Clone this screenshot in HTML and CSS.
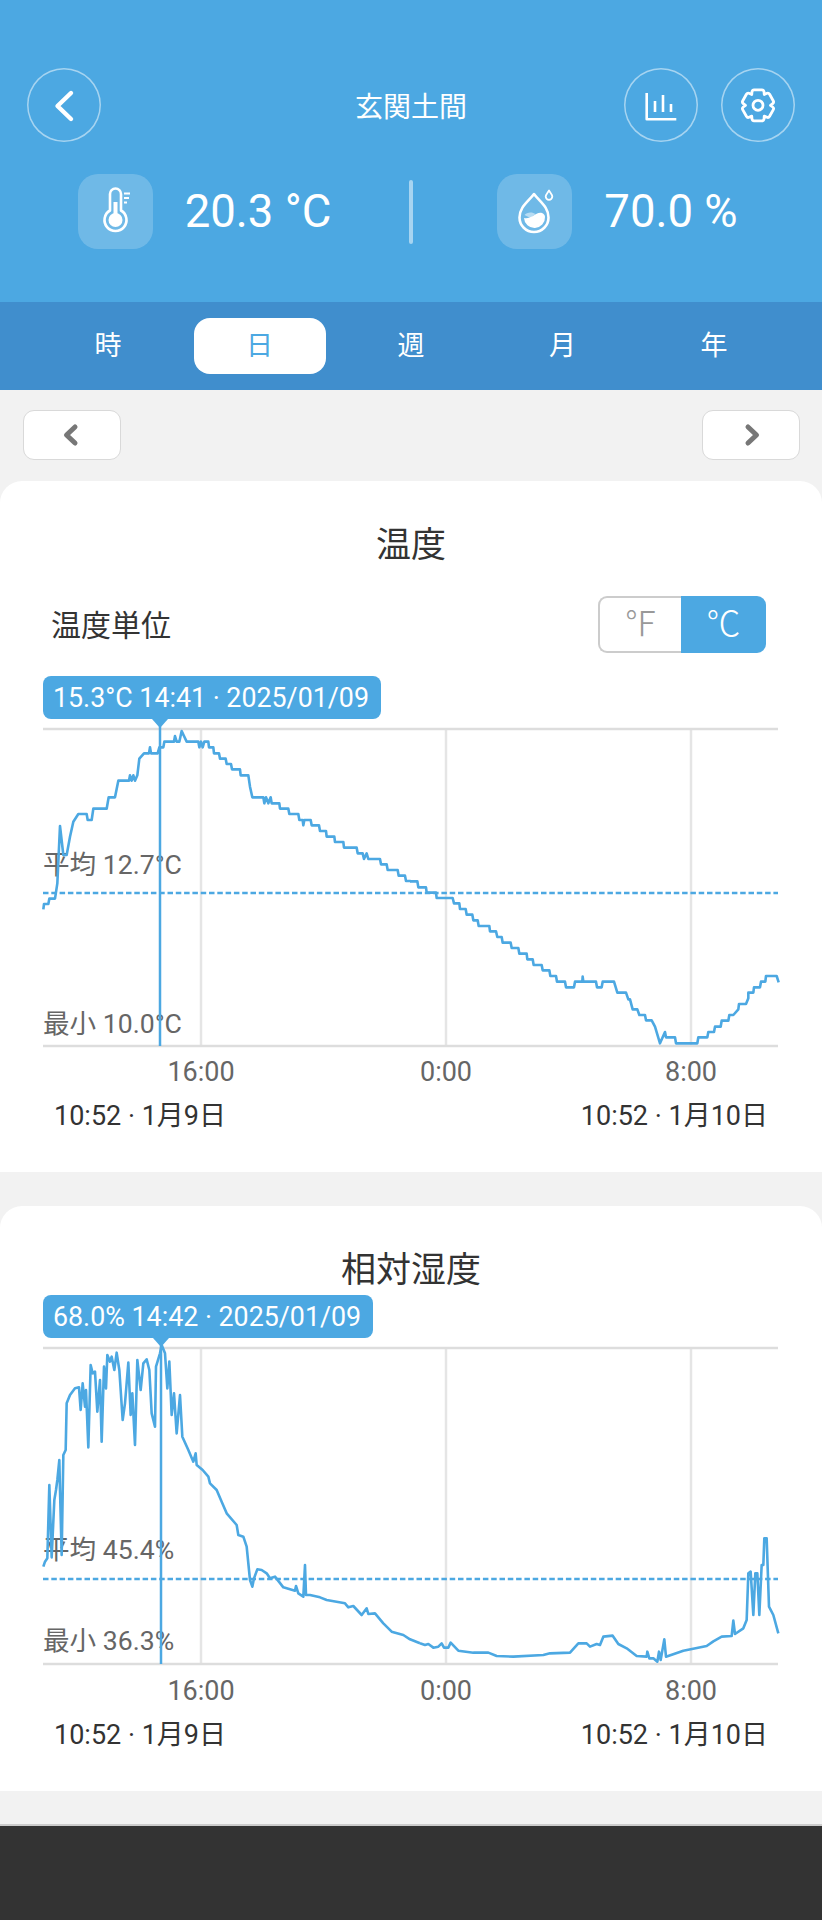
FILE: index.html
```html
<!DOCTYPE html>
<html lang="ja">
<head>
  <meta charset="UTF-8">
  <title>玄関土間</title>
  <meta name="viewport" content="width=device-width, initial-scale=1.0">
  <link rel="stylesheet" href="styles.css">
</head>
<body>

  <!-- Header -->
  <header class="header">
    <div class="top-row">
      <div class="top-left">
        <button class="round-btn">
          <svg width="74" height="74" viewBox="0 0 74 74"><polyline class="icon-line thick" points="44,25 30.5,38 44,51"/></svg>
        </button>
      </div>
      <div class="place">玄関土間</div>
      <div class="top-right">
        <button class="round-btn">
          <svg width="74" height="74" viewBox="0 0 74 74">
            <polyline class="icon-line" points="22.7,25 22.7,51.3 52.3,51.3"/>
            <path class="icon-line" d="M31 33V44M39 27V44M47 36V44"/>
          </svg>
        </button>
        <button class="round-btn">
          <svg width="74" height="74" viewBox="0 0 74 74">
            <g transform="translate(37 37.3)">
              <path class="icon-line gear" d="M6.25-10.8L9-12Q10.6-12.6 11.6-11L15.2-4.6Q16.2-2.9 14.7-1.7L12.5 0L14.7 1.7Q16.2 2.9 15.2 4.6L11.6 11Q10.6 12.6 9 12L6.25 10.8L6 13.7Q5.6 15.5 4 15.5H-4Q-5.6 15.5-6 13.7L-6.25 10.8L-9 12Q-10.6 12.6-11.6 11L-15.2 4.6Q-16.2 2.9-14.7 1.7L-12.5 0L-14.7-1.7Q-16.2-2.9-15.2-4.6L-11.6-11Q-10.6-12.6-9-12L-6.25-10.8L-6-13.7Q-5.6-15.5-4-15.5H4Q5.6-15.5 6-13.7z"/>
              <circle class="icon-line gear" r="5"/>
            </g>
          </svg>
        </button>
      </div>
    </div>

    <div class="stats">
      <div class="stat">
        <div class="tile">
          <svg width="75" height="75" viewBox="0 0 75 75">
            <path class="icon-line" d="M32 36.5V20a5.5 5.5 0 0 1 11 0V36.5a11 11 0 1 1-11 0z"/>
            <circle class="icon-fill" cx="37.5" cy="46" r="7"/>
            <rect class="icon-fill" x="35.5" y="28" width="4" height="18"/>
            <path class="icon-line tick" d="M46 19.5H52M46 24H51M46 28.5H49"/>
          </svg>
        </div>
        <span class="stat-value">20.3 °C</span>
      </div>
      <div class="divider"></div>
      <div class="stat">
        <div class="tile">
          <svg width="75" height="75" viewBox="0 0 75 75">
            <path class="icon-line" d="M37 20C31 28 22.5 33 22.5 43.5a14.5 14.5 0 0 0 29 0C51.5 33 43 28 37 20z"/>
            <path class="icon-fill pale" d="M27.5 41c2-3 8-3.5 11-1l-5 4z"/>
            <path class="icon-fill" d="M27 44c4 1 6-1 9-2c3-2 6-4 9-3c2 1 3 2 3 4a10.5 10.5 0 0 1-21 1z"/>
            <path class="icon-line tick" d="M52 16.5c-1.5 2.5-3.3 4-3.3 6a3.3 3.3 0 0 0 6.6 0c0-2-1.8-3.5-3.3-6z"/>
          </svg>
        </div>
        <span class="stat-value">70.0 %</span>
      </div>
    </div>
  </header>

  <!-- Range tabs -->
  <nav class="tabs">
    <div class="tab">時</div>
    <div class="tab active">日</div>
    <div class="tab">週</div>
    <div class="tab">月</div>
    <div class="tab">年</div>
  </nav>

  <!-- Prev / next -->
  <div class="pager">
    <button class="page-btn">
      <svg width="20" height="26" viewBox="0 0 20 26"><polyline class="chev" points="13,5 4.5,13 13,21"/></svg>
    </button>
    <button class="page-btn">
      <svg width="20" height="26" viewBox="0 0 20 26"><polyline class="chev" points="7,5 15.5,13 7,21"/></svg>
    </button>
  </div>

  <!-- Temperature -->
  <section class="card">
    <h2 class="card-title">温度</h2>
    <div class="unit-row">
      <span class="unit-label">温度単位</span>
      <div class="unit-toggle">
        <span class="unit-opt">℉</span>
        <span class="unit-opt on">℃</span>
      </div>
    </div>
    <div class="tooltip tooltip-temp">15.3°C 14:41 · 2025/01/09</div>
    <svg class="chart" width="822" height="373" viewBox="0 719 822 373">
      <path class="grid" d="M201 729V1046M446 729V1046M691 729V1046"/>
      <path class="axis" d="M43 729H778M43 1046H778"/>
      <line class="avg" x1="43" y1="893" x2="778" y2="893"/>
      <text class="label" x="43" y="874">平均 12.7°C</text>
      <text class="label" x="43" y="1033">最小 10.0°C</text>
      <g transform="translate(20 670) scale(.33333)">
        <polyline class="series" points="70,718 72,702 85,702 88,686 105,686 112,640 120,468 130,555 140,555 150,500 160,455 175,432 200,432 203,450 215,450 220,416 260,416 266,382 285,382 295,332 327,332 330,316 335,332 340,316 345,332 352,316 358,266 372,250 387,250 390,232 393,250 413,250 418,232 430,232 433,215 462,215 465,198 470,215 478,215 485,183 492,198 500,215 535,215 538,232 543,215 548,232 553,215 565,215 567,232 580,232 582,250 597,250 600,266 617,266 620,282 633,282 636,298 660,298 662,316 685,316 690,350 697,382 730,382 733,400 738,382 745,400 752,382 755,400 778,400 780,416 805,416 808,432 835,432 838,450 848,450 850,466 853,450 872,450 875,466 897,466 900,483 918,483 920,500 943,500 945,516 970,516 972,533 1010,533 1013,550 1028,550 1032,567 1040,550 1045,567 1080,567 1083,583 1100,583 1103,600 1133,600 1136,617 1155,617 1158,633 1172,633"/>
      </g>
      <g transform="translate(410 800) scale(.33333)">
        <polyline class="series" points="0,244 22,244 25,262 48,262 50,278 78,278 80,294 128,294 132,310 148,310 150,327 167,327 170,344 187,344 190,361 203,361 206,378 238,378 240,394 258,394 262,411 275,411 278,428 302,428 305,444 325,444 328,461 350,461 352,478 368,478 371,495 395,495 398,511 418,511 421,528 438,528 441,545 465,545 468,562 492,562 495,545 517,545 518,530 520,545 558,545 561,562 575,562 578,545 612,545 622,578 648,578 655,598 660,598 668,628 682,628 688,645 705,645 708,661 725,661 735,680 750,730 758,712 765,696 768,712 795,712 798,730 862,730 865,712 892,712 895,696 912,696 915,680 932,680 935,662 955,662 958,645 970,645 985,628 987,612 1008,612 1015,595 1015,578 1030,578 1032,562 1050,562 1053,545 1066,545 1068,528 1100,528 1106,547"/>
      </g>
      <line class="cursor" x1="160" y1="719" x2="160" y2="1046"/>
      <polygon class="pointer" points="152,719 168,719 160,728"/>
      <text class="tick-label" x="201" y="1081">16:00</text>
      <text class="tick-label" x="446" y="1081">0:00</text>
      <text class="tick-label" x="691" y="1081">8:00</text>
    </svg>
    <div class="range-row">
      <span>10:52 · 1月9日</span>
      <span>10:52 · 1月10日</span>
    </div>
  </section>

  <!-- Humidity -->
  <section class="card card-rh">
    <h2 class="card-title">相対湿度</h2>
    <div class="tooltip tooltip-rh">68.0% 14:42 · 2025/01/09</div>
    <svg class="chart" width="822" height="373" viewBox="0 1338 822 373">
      <path class="grid" d="M201 1348V1664M446 1348V1664M691 1348V1664"/>
      <path class="axis" d="M43 1348H778M43 1664H778"/>
      <line class="avg" x1="43" y1="1579" x2="778" y2="1579"/>
      <text class="label" x="43" y="1559">平均 45.4%</text>
      <text class="label" x="43" y="1650">最小 36.3%</text>
      <g transform="translate(20 1480) scale(.33333)">
        <polyline class="series" points="70,260 75,245 82,235 88,15 95,232 103,60 108,30 112,0 118,-60 120,30 125,225 130,-75 137,-90 140,-230 150,-255 165,-275 177,-278 182,-210 188,-290 195,-220 198,-270 205,-98 212,-345 218,-320 225,-325 232,-205 240,-300 245,-115 252,-340 258,-275 262,-375 270,-355 275,-370 283,-330 290,-382 298,-330 308,-180 315,-230 325,-352 332,-195 337,-260 345,-105 352,-360 362,-270 370,-350 380,-362 388,-330 395,-200 405,-160 408,-340 420,-380 425,-405 435,-380 442,-275 448,-355 455,-195 462,-260 470,-140 480,-255 487,-130 505,-90 520,-55 527,-80 530,-45 548,-30 565,-10 570,10 590,30 605,65 620,100 650,135 655,165 670,170 680,200 690,300 697,320 702,295 712,268 725,270 740,280 750,295 765,290 790,322 825,332 828,318 835,340 850,350 855,255 858,345 870,345 900,352 920,360 975,370 985,382 1000,378 1025,405 1040,385 1045,402 1065,400 1090,430 1115,455 1150,465 1170,478 1200,490"/>
      </g>
      <g transform="translate(420 1500) scale(.33333)">
        <polyline class="series" points="0,430 15,435 25,432 40,443 55,440 65,430 72,443 85,443 92,428 115,452 160,458 205,458 230,468 280,470 370,465 390,460 450,458 475,430 500,430 510,440 530,432 540,435 550,410 578,407 595,432 620,445 650,468 680,470 682,455 688,475 700,475 712,485 717,455 722,480 733,418 738,470 790,452 860,438 880,424 905,410 935,408 940,362 945,402 970,385 980,360 985,220 992,215 1000,345 1006,220 1012,220 1018,345 1025,195 1030,195 1033,115 1040,115 1047,320 1060,345 1075,400"/>
      </g>
      <line class="cursor" x1="161" y1="1338" x2="161" y2="1664"/>
      <polygon class="pointer" points="153,1338 169,1338 161,1347"/>
      <text class="tick-label" x="201" y="1700">16:00</text>
      <text class="tick-label" x="446" y="1700">0:00</text>
      <text class="tick-label" x="691" y="1700">8:00</text>
    </svg>
    <div class="range-row">
      <span>10:52 · 1月9日</span>
      <span>10:52 · 1月10日</span>
    </div>
  </section>

  <footer class="footer"></footer>

</body>
</html>
```

FILE: styles.css
```css
/* Basic styling */
body {
  margin: 0;
  height: 1920px;
  overflow: hidden;
  background-color: #f2f2f2;
  color: #333;
  font-family: Roboto, "Noto Sans CJK JP", sans-serif;
}
button {
  padding: 0;
  background: none;
  font: inherit;
}
svg {
  display: block;
}

/* Header */
.header {
  height: 302px;
  box-sizing: border-box;
  padding-top: 68px;
  background-color: #4ca8e2;
  color: white;
}
.top-row {
  display: grid;
  grid-template-columns: 1fr auto 1fr;
  align-items: center;
  padding: 0 27px;
}
.top-left {
  display: flex;
}
.top-right {
  display: flex;
  justify-content: flex-end;
  gap: 23px;
}
.place {
  font-size: 28px;
}
.round-btn {
  width: 74px;
  height: 74px;
  border: 0;
  border-radius: 50%;
  box-shadow: inset 0 0 0 1.5px rgba(255, 255, 255, 0.5);
}
.icon-line {
  fill: none;
  stroke: white;
  stroke-width: 2.6;
  stroke-linecap: butt;
  stroke-linejoin: round;
}
.icon-line.thick {
  stroke-width: 4.4;
  stroke-linecap: round;
}
.icon-line.gear {
  stroke-width: 2.8;
}
.icon-line.tick {
  stroke-width: 1.8;
}
.icon-fill {
  fill: white;
}
.icon-fill.pale {
  opacity: 0.5;
}

/* Current readings */
.stats {
  display: flex;
  align-items: center;
  margin-top: 32px;
}
.stat {
  flex: 1;
  display: flex;
  align-items: center;
  justify-content: center;
  gap: 32px;
}
.tile {
  width: 75px;
  height: 75px;
  border-radius: 20px;
  background-color: rgba(255, 255, 255, 0.2);
}
.stat-value {
  font-size: 45.5px;
}
.divider {
  width: 4px;
  height: 64px;
  border-radius: 2px;
  background-color: rgba(255, 255, 255, 0.5);
}

/* Tabs */
.tabs {
  display: flex;
  justify-content: space-between;
  height: 88px;
  box-sizing: border-box;
  padding: 16px 42px;
  background-color: #408ecd;
  color: white;
}
.tab {
  width: 132px;
  height: 56px;
  border-radius: 16px;
  font-size: 27px;
  line-height: 56px;
  text-align: center;
}
.tab.active {
  background-color: white;
  color: #4ca8e2;
}

/* Prev / next */
.pager {
  display: flex;
  justify-content: space-between;
  padding: 20px 22px 21px 23px;
}
.page-btn {
  display: flex;
  align-items: center;
  justify-content: center;
  width: 98px;
  height: 50px;
  border: 1.5px solid #d9d9d9;
  border-radius: 11px;
  background-color: white;
}
.chev {
  fill: none;
  stroke: #777;
  stroke-width: 5;
  stroke-linecap: round;
  stroke-linejoin: round;
}

/* Cards */
.card {
  height: 691px;
  box-sizing: border-box;
  padding-top: 41px;
  border-radius: 22px 22px 0 0;
  background-color: white;
}
.card-rh {
  height: 585px;
  margin-top: 34px;
}
.card-title {
  margin: 0;
  font-size: 35px;
  font-weight: 400;
  line-height: 48px;
  text-align: center;
}
.unit-row {
  display: flex;
  align-items: center;
  justify-content: space-between;
  margin-top: 26px;
  padding: 0 56px 0 51px;
}
.unit-label {
  font-size: 30px;
  line-height: 50px;
  margin-top: 2px;
}
.unit-toggle {
  display: flex;
  height: 57px;
}
.unit-opt {
  width: 81px;
  border: 2px solid #ccc;
  border-right: 0;
  border-radius: 9px 0 0 9px;
  font-size: 34px;
  font-weight: 300;
  line-height: 53px;
  text-align: center;
  color: #999;
}
.unit-opt.on {
  width: 85px;
  border: 0;
  border-radius: 0 9px 9px 0;
  line-height: 57px;
  background-color: #4ca8e2;
  color: white;
}

/* Charts */
.tooltip {
  box-sizing: border-box;
  height: 43px;
  margin-left: 43px;
  padding-left: 10px;
  border-radius: 8px;
  background-color: #4ca8e2;
  color: white;
  font-size: 26.8px;
  line-height: 45px;
}
.tooltip-temp {
  width: 338px;
  margin-top: 23px;
}
.tooltip-rh {
  width: 330px;
}
.grid {
  fill: none;
  stroke: #e5e5e5;
  stroke-width: 2.5;
}
.axis {
  fill: none;
  stroke: #ddd;
  stroke-width: 2.5;
}
.avg {
  stroke: #4ca8e2;
  stroke-width: 2.4;
  stroke-dasharray: 5.5 2.8;
}
.series {
  fill: none;
  stroke: #4ca8e2;
  stroke-width: 2.6;
  stroke-linejoin: round;
  vector-effect: non-scaling-stroke;
}
.cursor {
  stroke: #4ca8e2;
  stroke-width: 2.5;
}
.pointer {
  fill: #4ca8e2;
}
.label {
  fill: #666;
  font-size: 26.6px;
}
.tick-label {
  fill: #666;
  font-size: 27px;
  text-anchor: middle;
}
.range-row {
  display: flex;
  justify-content: space-between;
  margin-top: 6px;
  padding: 0 54px;
  font-size: 27px;
  line-height: 36px;
}

/* Bottom bar */
.footer {
  height: 94px;
  margin-top: 33px;
  border-top: 2px solid #ccc;
  background-color: #333;
}
```
